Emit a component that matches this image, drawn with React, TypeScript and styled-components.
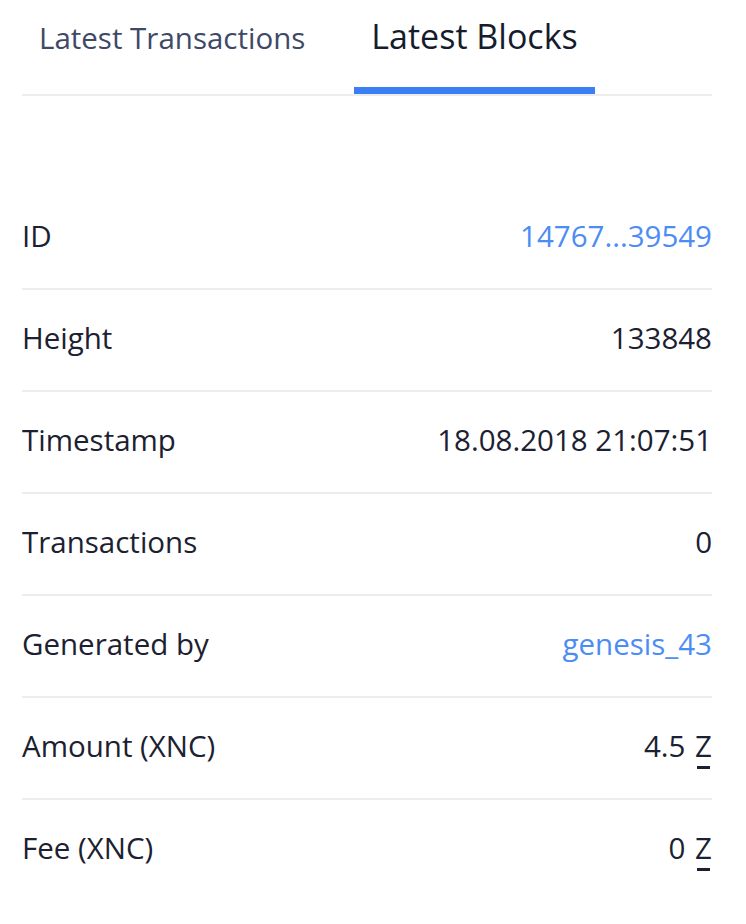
import React from "react";
import styled, { createGlobalStyle } from "styled-components";

const Global = createGlobalStyle`
  html, body { margin: 0; padding: 0; background: #fff; }
  body { font-family: "Open Sans", "Lato", sans-serif; -webkit-font-smoothing: antialiased; }
`;

const Page = styled.div`
  width: 690px;
  padding: 0 34px 0 22px;
`;

const TabBar = styled.div`
  display: flex;
  gap: 32px;
  border-bottom: 2px solid #ededed;
  height: 94px;
  margin-bottom: 92px;
`;

const Tab = styled.div<{ $active?: boolean }>`
  position: relative;
  padding: ${(p) => (p.$active ? "16px" : "17.5px")} 17px 0;
  font-size: ${(p) => (p.$active ? "34px" : "29.5px")};
  line-height: 40px;
  color: ${(p) => (p.$active ? "#161c2b" : "#3e4966")};
  &::after {
    content: "";
    display: ${(p) => (p.$active ? "block" : "none")};
    position: absolute;
    left: 0;
    right: 0;
    bottom: 0;
    height: 7px;
    background: #3a7ff6;
  }
`;

const Row = styled.div`
  display: flex;
  justify-content: space-between;
  align-items: center;
  height: 95px;
  padding-bottom: 5px;
  border-bottom: 2px solid #ededed;
  font-size: 29.5px;
  color: #1b2130;
  &:last-child { border-bottom: none; }
`;

const Label = styled.span``;

const Value = styled.span<{ $link?: boolean }>`
  color: ${(p) => (p.$link ? "#4c8cf5" : "#1b2130")};
`;

const Zed = styled.span`
  position: relative;
  display: inline-block;
  margin-left: 2px;
  &::after {
    content: "";
    position: absolute;
    left: 2px;
    right: 2px;
    bottom: -3px;
    height: 3px;
    background: currentColor;
  }
`;

const rows: { label: string; value: React.ReactNode; link?: boolean }[] = [
  { label: "ID", value: "14767...39549", link: true },
  { label: "Height", value: "133848" },
  { label: "Timestamp", value: "18.08.2018 21:07:51" },
  { label: "Transactions", value: "0" },
  { label: "Generated by", value: "genesis_43", link: true },
  { label: "Amount (XNC)", value: <>4.5 <Zed>Z</Zed></> },
  { label: "Fee (XNC)", value: <>0 <Zed>Z</Zed></> },
];

export default function App() {
  return (
    <Page>
      <Global />
      <TabBar>
        <Tab>Latest Transactions</Tab>
        <Tab $active>Latest Blocks</Tab>
      </TabBar>
      {rows.map((r) => (
        <Row key={r.label}>
          <Label>{r.label}</Label>
          <Value $link={r.link}>{r.value}</Value>
        </Row>
      ))}
    </Page>
  );
}
